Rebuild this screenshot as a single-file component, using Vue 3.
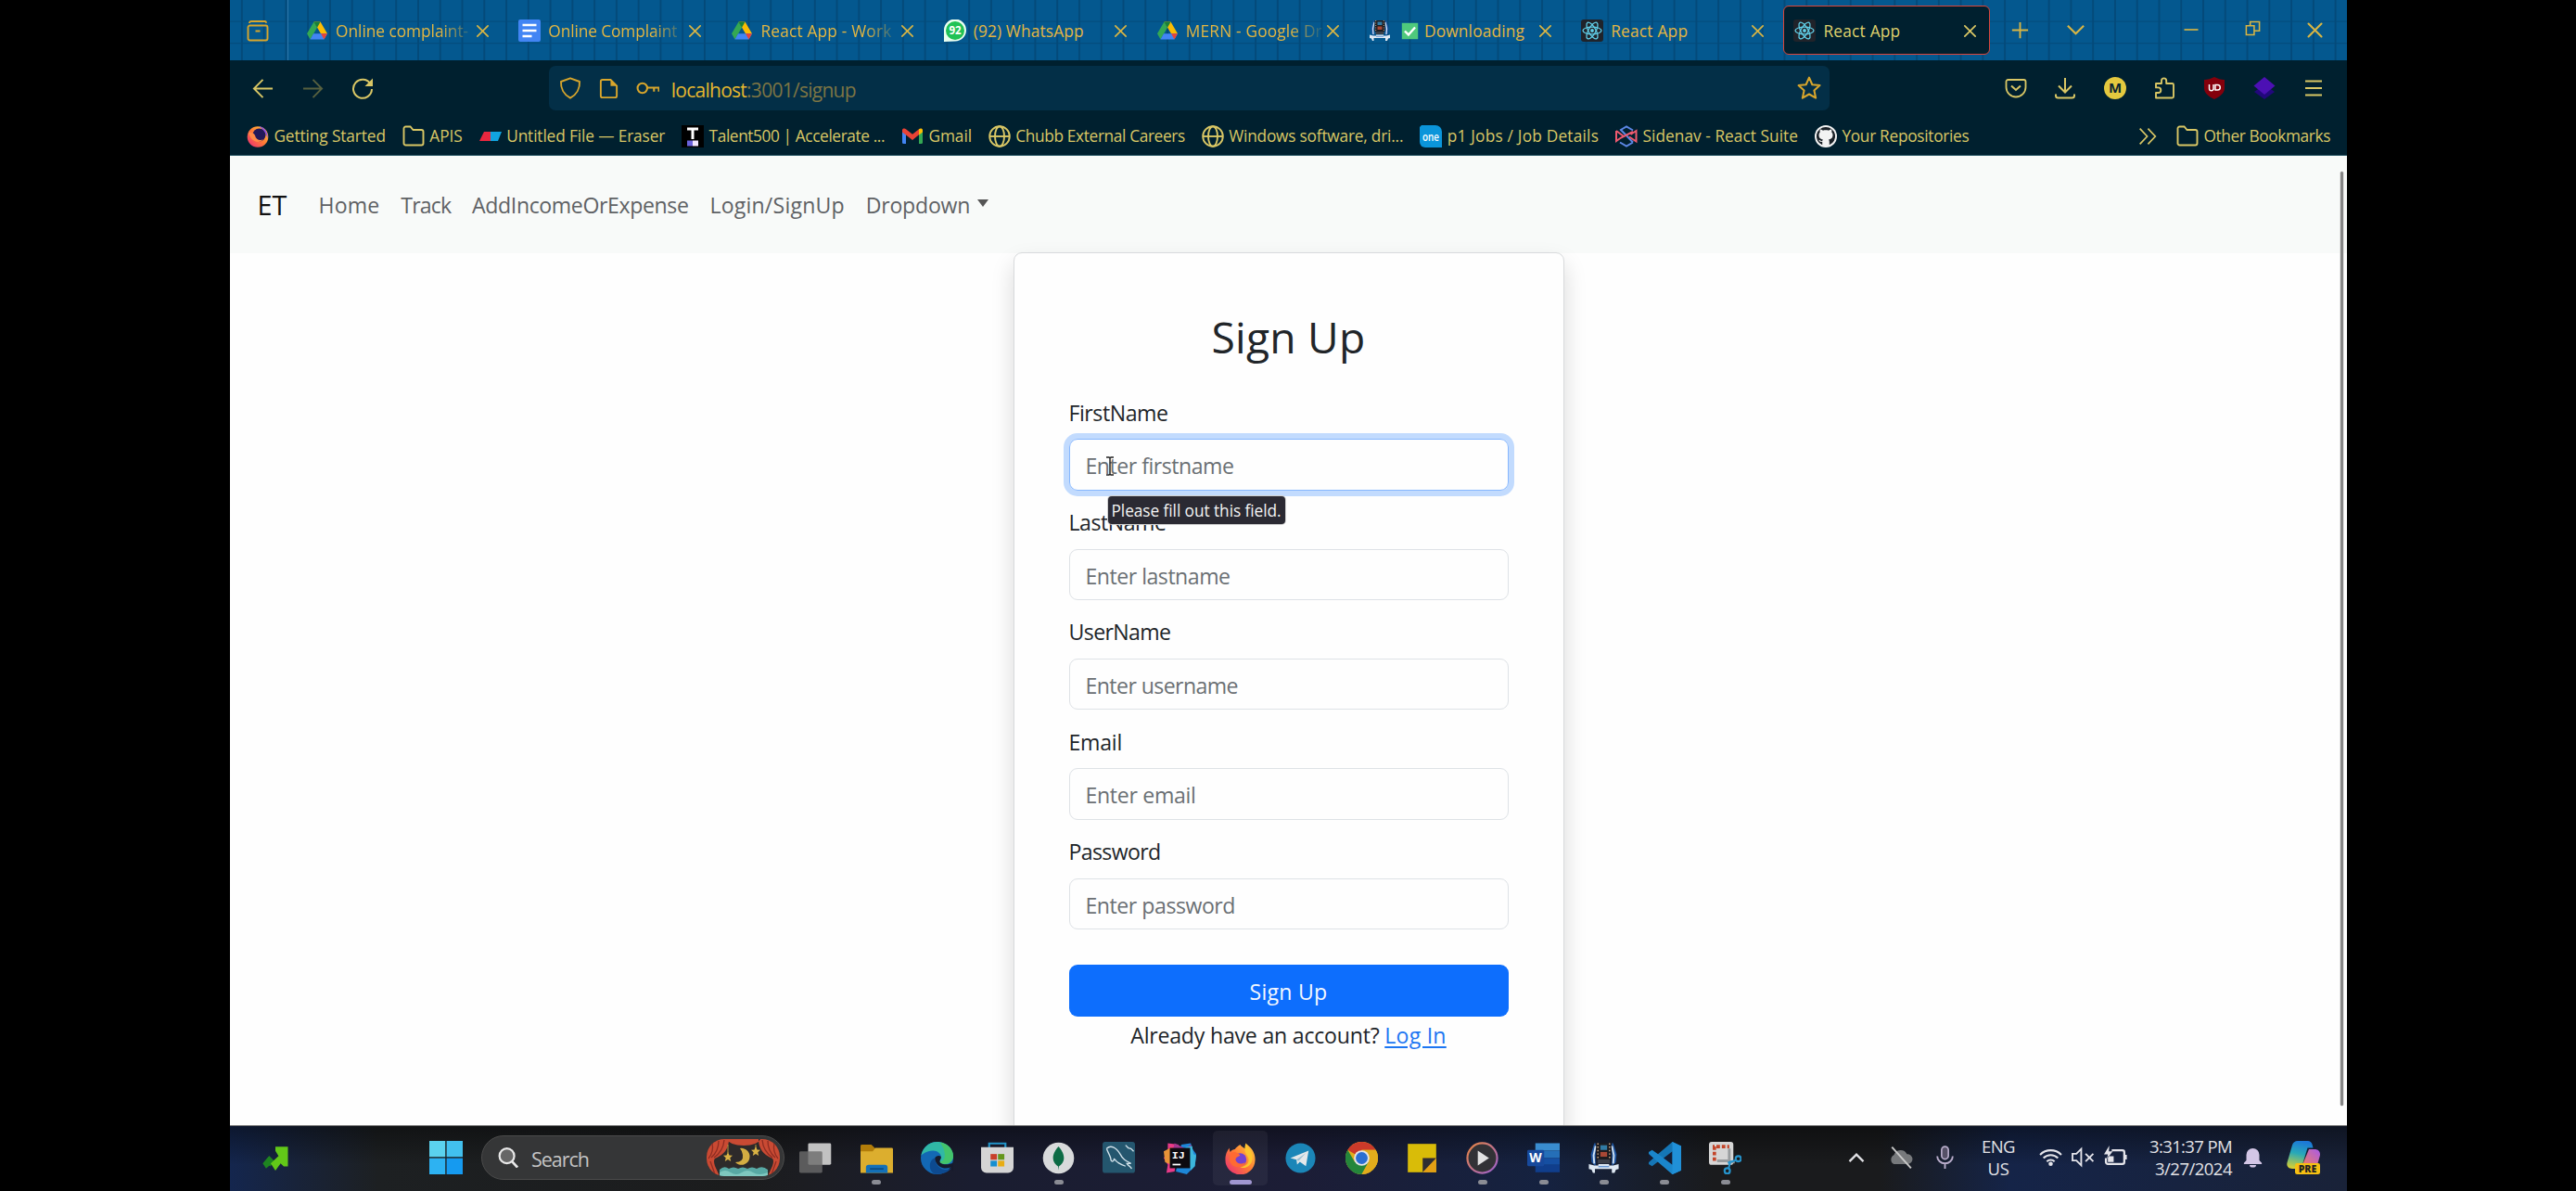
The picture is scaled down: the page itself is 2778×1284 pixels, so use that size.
<script setup>
import { h } from 'vue'

// Spreads letter spacing so that a text run takes the given width in pixels.
const vFit = {
  mounted(el, { value }) {
    const natural = el.getBoundingClientRect().width
    el.style.letterSpacing = (value - natural) / el.textContent.length + 'px'
  }
}

const react = '<rect width="24" height="24" rx="3" fill="#20232a"/><g fill="none" stroke="#61cfe8" stroke-width="1.3"><ellipse cx="12" cy="12" rx="10" ry="3.9"/><ellipse cx="12" cy="12" rx="10" ry="3.9" transform="rotate(60 12 12)"/><ellipse cx="12" cy="12" rx="10" ry="3.9" transform="rotate(120 12 12)"/></g><circle cx="12" cy="12" r="1.9" fill="#61cfe8"/>'
const film = '<path d="M5 1L2.500 9l.5 6 3 3V1zM19 1l2.500 8-.5 6-3 3V1z" fill="#1f55a0"/><path d="M6 3L4.500 10l.5 6M18 3l1.500 7-.5 6" fill="none" stroke="#cfe2f4" stroke-width="1.300"/><rect x="6.500" y="1" width="11" height="12" fill="#1d1c20"/><path d="M7.700 1v12M16.300 1v12" stroke="#c9a482" stroke-width="1" stroke-dasharray="1 1.500"/><path d="M9.500 2.500h5v3.500h-5z" fill="#317ba5"/><path d="M9.500 7.500h5v3.500h-5z" fill="#a84835"/><path d="M7.500 13h9v3h-9z" fill="#3b3f48"/><path d="M1 16.500l4 1h3v-1h8v1h3l4-1v3.500l-2 .5-1 2.500h-2V20h-1.500H7.500 5.500v3H4l-1-2.500-2-.5z" fill="#dfe9f3"/><path d="M8 18.300h8" stroke="#6898d4"/>'
const fox = '<path d="M12 2c1 2 3 2 4.500 4 0-2-.5-3.500-.5-5 4 3 7.300 7 7 12.500A11 11 0 0 1 1 13C1 9 2.500 6.500 4 4.500c0 1.500.2 2.300.7 3C5.500 6 7 5.500 8 5.500 9 4 10.500 3 12 2z" fill="url(#foxg)"/><path d="M16 1c1 3 6 6 5 12-1 5-5 7-9 6 4-1 7-3 6-7-1-3-4-4-2-11z" fill="#fdc52d"/><circle cx="12" cy="13" r="4.600" fill="#7542cf"/><path d="M5 8c3-1 5 0 7 2-1 1-3 1-3.500 3 .5 3 4 4 7 2-1 4-10 6-11.500-2z" fill="#ff6a32"/>'

const icons = {
  archive: '<path d="M4.500 2h15c1 0 1.500.7 1.500 1.800M3.500 6.500h17a2 2 0 0 1 2 2v12a2 2 0 0 1-2 2h-17a2 2 0 0 1-2-2v-12a2 2 0 0 1 2-2zM9.500 12.500h5M3 4c0-1.300.7-2 1.700-2" fill="none" stroke="#d8a62c" stroke-width="1.900"/>',
  drive: '<path d="M8.500 2.500h7l7.500 12.800h-7z" fill="#fbbc04"/><path d="M8.500 2.500L1 15.300l3.500 6.200L12 8.700z" fill="#34a853"/><path d="M8.500 2.500h7L12 8.700z" fill="#188038"/><path d="M8 15.300h8l-3.500 0h10.500l-3.500 6.200h-15z" fill="#4285f4"/><path d="M16 15.300h7l-3.500 6.200z" fill="#ea4335"/>',
  docs: '<rect width="24" height="24" rx="2" fill="#4285f4"/><path d="M4.500 6h15M4.500 12h15M4.500 18h10" stroke="#fff" stroke-width="2.600"/>',
  whatsapp: '<path d="M0 24V11A12 12 0 1 1 12 23.500z" fill="#eafff0"/><circle cx="12" cy="12" r="10" fill="#1fc255"/><text x="12" y="16.300" font-size="11.500" font-weight="700" fill="#fff" text-anchor="middle" font-family="Open Sans">92</text>',
  film, react, fox,
  check: '<rect x="1" y="1" width="22" height="22" fill="#4fc97c"/><path d="M5 12l5 5L19 7" fill="none" stroke="#fff" stroke-width="3"/>',
  x: '<path d="M4 4l16 16M20 4L4 20" stroke="currentColor" stroke-width="2.400" stroke-linecap="round"/>',
  plus: '<path d="M12 3v18M3 12h18" stroke="currentColor" stroke-width="2"/>',
  down: '<path d="M3 7l9 9 9-9" fill="none" stroke="currentColor" stroke-width="2.200"/>',
  up: '<path d="M3 17l9-9 9 9" fill="none" stroke="currentColor" stroke-width="2.700"/>',
  min: '<path d="M3 12h18" stroke="currentColor" stroke-width="2"/>',
  restore: '<path d="M2 8h12v14H2zM8 8V2h14v14h-8" fill="none" stroke="currentColor" stroke-width="2.200"/>',
  back: '<path d="M23 12H2.500M12 2l-10 10 10 10" fill="none" stroke="currentColor" stroke-width="2"/>',
  fwd: '<path d="M1 12h20.500M12 2l10 10-10 10" fill="none" stroke="currentColor" stroke-width="2"/>',
  reload: '<path d="M20.800 8A10 10 0 1 0 22 13" fill="none" stroke="currentColor" stroke-width="2"/><path d="M23 1.500v8.500h-8.500z" fill="currentColor"/>',
  shield: '<path d="M12 1.300L22 5c.5 7-3 14-10 17.700C5 19 1.500 12 2 5z" fill="none" stroke="currentColor" stroke-width="1.900" stroke-linejoin="round"/>',
  page: '<path d="M14 2H5a2 2 0 0 0-2 2v16a2 2 0 0 0 2 2h14a2 2 0 0 0 2-2V9z" fill="none" stroke="currentColor" stroke-width="2"/><path d="M14 1v8h8z" fill="currentColor"/>',
  key: '<circle cx="6.500" cy="11.500" r="5" fill="none" stroke="currentColor" stroke-width="2"/><path d="M11.500 11h12v4M18.500 11v4" fill="none" stroke="currentColor" stroke-width="2"/>',
  star: '<path d="M12 1.500l3.100 7 7.500.8-5.600 5 1.600 7.500L12 18l-6.600 3.800L7 14.300l-5.600-5 7.500-.8z" fill="none" stroke="currentColor" stroke-width="1.900" stroke-linejoin="round"/>',
  pocket: '<path d="M3.500 3h17a2 2 0 0 1 2 2v6a10.500 10.500 0 0 1-21 0V5a2 2 0 0 1 2-2z" fill="none" stroke="currentColor" stroke-width="1.800"/><path d="M7 9.500l5 4.500 5-4.500" fill="none" stroke="currentColor" stroke-width="2"/>',
  download: '<path d="M12 1v15M5 9.500l7 7 7-7M2 18.500V20a2.500 2.500 0 0 0 2.500 2.500h15A2.500 2.500 0 0 0 22 20v-1.500" fill="none" stroke="currentColor" stroke-width="2"/>',
  m: '<circle cx="12" cy="12" r="12" fill="#e4c93f"/><text x="12" y="17.300" font-size="15" font-weight="700" fill="#0a2431" text-anchor="middle" font-family="Open Sans">M</text>',
  puzzle: '<path d="M3 22.500V17h2.500a2.800 2.800 0 0 0 0-5.600H3V7h6V4a2.600 2.600 0 0 1 5.200 0v3h6.300a1.500 1.500 0 0 1 1.500 1.500V21a1.500 1.500 0 0 1-1.500 1.500z" fill="none" stroke="currentColor" stroke-width="1.900" stroke-linejoin="round"/>',
  ublock: '<path d="M12 0c4 2 7 3 11 3v9c0 6-6 9.500-11 12C7 21.500 1 18 1 12V3c4 0 7-1 11-3z" fill="#84000c"/><path d="M6.500 8v4.500a2 2 0 0 0 4.500 0V8v6M14 8.500h1.500a2.700 2.700 0 0 1 0 5.500H13V8.500z" fill="none" stroke="#fff" stroke-width="1.500"/>',
  layers: '<path d="M12 8l11 8-11 8-11-8z" fill="#22087c"/><path d="M12 0l11.500 9.500L12 19 .5 9.500z" fill="#4c10b4"/>',
  menu: '<path d="M3 4.500h18M3 12h18M3 19.500h18" stroke="currentColor" stroke-width="2"/>',
  ff: '<circle cx="12" cy="12.500" r="11.300" fill="url(#foxg)"/><circle cx="13.500" cy="10.500" r="7" fill="#22185a"/><path d="M13 1a11.500 11.500 0 0 1 9.500 13C21 9 19 5 13 1z" fill="#8a4ae8"/><path d="M2 8c4-1 6 1 7 3 1 5 6 6 9 4-4 5-13 4-16-7z" fill="#ff8a48"/>',
  folder: '<path d="M1.500 19.500v-16a2 2 0 0 1 2-2h5l3 3.500h9a2 2 0 0 1 2 2v12.500a2 2 0 0 1-2 2h-17a2 2 0 0 1-2-2z" fill="none" stroke="currentColor" stroke-width="1.900"/>',
  eraser: '<path d="M5 7h7v10H0z" fill="#e8273f"/><path d="M12 7h12l-4 10h-8z" fill="#11a3e0"/>',
  talent: '<rect width="24" height="24" fill="#000"/><path d="M6 4h12M12 3v12" stroke="#fff" stroke-width="3"/><path d="M6 16.500h6v6H6z" fill="#6a62dc"/><path d="M12 16.500h6v6h-6z" fill="#f1e6ff"/>',
  gmail: '<path d="M1 5h4v15H2.500A1.500 1.500 0 0 1 1 18.500z" fill="#4285f4"/><path d="M19 5h4v13.500a1.500 1.500 0 0 1-1.500 1.500H19z" fill="#34a853"/><path d="M1 5.500C1 3.500 3.500 3 5 4.300l7 5.500 7-5.500v6L12 16l-7-5.500-4-3z" fill="#ea4335"/><path d="M19 4.300c1.500-1.300 4-.8 4 1.200v2l-4 3z" fill="#fbbc04"/>',
  globe: '<g fill="none" stroke="currentColor" stroke-width="1.900"><circle cx="12" cy="12" r="10.800"/><ellipse cx="12" cy="12" rx="5" ry="10.800"/><path d="M1.500 12h21"/></g>',
  one: '<path d="M2 0h15a7 7 0 0 1 7 7v17H6a6 6 0 0 1-6-6V2z" fill="#0b95da"/><text x="12" y="16.500" font-size="13" font-weight="600" textLength="18" lengthAdjust="spacingAndGlyphs" fill="#fff" text-anchor="middle" font-family="Open Sans">one</text>',
  rsuite: '<g fill="none" stroke-width="2"><path d="M5 5.500L12 1.300l7 4.200M5 18.500l7 4.200 7-4.200M6 5l13 13.500" stroke="#5b87e5"/><path d="M1 6v11l5-3.500L19 7M1 6l8 6M15 12.500l7.500 5V6l-6 4" stroke="#ee5a6f"/></g>',
  github: '<circle cx="12" cy="12" r="12" fill="#f3f3f3"/><path d="M12 2a10 10 0 0 0-3.800 19.300v-3.500c-2.600.5-3.400-.8-4-2 2 .3 2 1.600 4 1.200.1-.7.400-1.200.8-1.500C5.500 15 4.500 13 4.500 10.500c0-1.200.5-2.200 1.200-3-.2-.8-.2-2 .2-3 1.300 0 2.300.7 3 1.200 2-.5 4.200-.5 6.200 0 .7-.5 1.700-1.200 3-1.200.4 1 .4 2.200.2 3 .7.8 1.200 1.800 1.200 3 0 2.500-1 4.500-4.500 5 .5.500.8 1.300.8 2.400v3.400A10 10 0 0 0 12 2z" fill="#1b2127"/>',
  more: '<path d="M2 2l9.500 10L2 22M12.500 2L22 12l-9.500 10" fill="none" stroke="currentColor" stroke-width="2"/>',
  stock: '<path d="M0 17l6-7 5 5-4 5-3-3-2 2.500z" fill="#1e8420"/><path d="M0 17l3 5L11 15 6 10z" fill="#1e8420"/><path d="M7.500 17l7.500-7-3-5V1h12v19h-4l-3-3-5 7z" fill="#62c818"/>',
  windows: '<path d="M0 0h11.500v11.500H0z" fill="#5bd2ee"/><path d="M12.400 0H24v11.500H12.400z" fill="#42c0ee"/><path d="M0 12.400h11.500V24H0z" fill="#2db2f2"/><path d="M12.400 12.400H24V24H12.400z" fill="#159af0"/>',
  search: '<circle cx="10.500" cy="10" r="8.700" fill="#666" stroke="#e8e8e8" stroke-width="2.400"/><path d="M16.500 16.500l6.500 7" stroke="#e8e8e8" stroke-width="3"/>',
  taskview: '<rect x="6.500" y="1" width="17" height="16" rx="1" fill="#c2c2c2"/><rect x="0" y="7" width="17" height="16" rx="1" fill="#6b6b6b" fill-opacity=".8"/>',
  explorer: '<path d="M0 3a1 1 0 0 1 1-1h7l3 3v5H0z" fill="#b27d0a"/><path d="M0 7h9l2-2.500h12a1 1 0 0 1 1 1V23H0z" fill="#dcae2e"/><path d="M4 23v-4a2 2 0 0 1 2-2h12a2 2 0 0 1 2 2v4z" fill="#1370b8"/><path d="M7 20h10" stroke="#0a4a80" stroke-width="1.200"/>',
  edge: '<circle cx="12" cy="12" r="12" fill="#1368b4"/><path d="M.3 10C1.500 4 6.500 0 12 0c7 0 12 5 12 10.500 0 4-3 6-6 6-2.500 0-4-1-4-2 0-1 1-1.500 1-3.500 0-2-2.500-4.500-6-4.500C4 6.500.8 9.500.3 10z" fill="#30b8a6"/><path d="M14 0.300C20 1 24 5.500 24 10.500c0 4-3 6-6 6-2.500 0-4-1-4-2 5 0 5-8 0-14.200z" fill="#49c75d" fill-opacity=".8"/><path d="M10.500 12c0 4.500 3.500 8.500 8 8.500 2 0 3-.5 4-1C20 23 15 24.300 10.500 23.800 5 21.500 6 13 10.500 12z" fill="#0d4a90"/><path d="M10.500 12c0 3 2 6.200 6 7.300 3 .6 6-.3 6.500-1.300v2.500l3 3V15l-5 1.500c-4 .6-7-.5-7-2 0-1 1-1.500 1-3.500-2-1.500-4 0-4.500 1z" fill="#161a2c"/>',
  store: '<path d="M6 5V1.200h12V5" fill="none" stroke="#2194c8" stroke-width="1.500"/><path d="M0 4h24v15a4 4 0 0 1-4 4H4a4 4 0 0 1-4-4z" fill="#d5d5d5"/><path d="M7 9h4.700v4.200H7z" fill="#c8402a"/><path d="M12.500 9h4.700v4.200h-4.700z" fill="#64961c"/><path d="M7 14h4.700v4.200H7z" fill="#168fd0"/><path d="M12.500 14h4.700v4.200h-4.700z" fill="#e8ad14"/>',
  mongo: '<circle cx="12" cy="12" r="11.500" fill="#d8dadb"/><path d="M12 3.500c3 3.500 4 6 4 8.500 0 3-2 5-3.700 6.200L12 21l-.3-2.800C10 17 8 15 8 12c0-2.500 1-5 4-8.500z" fill="#0c6b45"/>',
  mysql: '<rect width="24" height="23" rx="2" fill="#24566e"/><path d="M3 5c3-3 7-1 10 4 2 4 4 5 8 7l-3 0c1 2 3 2 3.500 4M3 5c1 3 2 4 3 7 0 2 1 3 2 2s0-2 1-1c2 3 5 4 8 5M17 2.500l2 2 2 .5 2 2" fill="none" stroke="#d4e4ec" stroke-width=".9"/>',
  ij: '<path d="M3 1l8 1-3 20-6 1 1-6-3-5 3-5z" fill="#e83a88"/><path d="M0 7l6-3v13l-5-2z" fill="#e89338"/><path d="M13 2l7-1 1 4 3 4-1 9-6 6-8-2z" fill="#1d86d8"/><path d="M8 1l8 4 4-3 2 8H6z" fill="#a2378f"/><path d="M16 4l5-1 1 6 2 1-1 8-3 3z" fill="#3cb6dc"/><rect x="4.500" y="4.500" width="15" height="15" fill="#0c0a10"/><text x="6" y="12.500" font-size="8" font-weight="700" fill="#fff" font-family="Liberation Mono">IJ</text><path d="M6.500 16.800h6" stroke="#fff" stroke-width="1.200"/>',
  telegram: '<circle cx="12" cy="12" r="11" fill="#1b86b8"/><path d="M4.500 12L18 6.500 16 18l-4.500-3.200-2 2-.5-3.600z" fill="#e4e8ea"/><path d="M9 13.200l7-5-5.500 6z" fill="#9ac0d4"/>',
  chrome: '<circle cx="12" cy="12" r="12" fill="#e1ac1c"/><path d="M12 12L1.600 6A12 12 0 0 1 22.400 6H12z" fill="#cb3a2a"/><path d="M1.600 6A12 12 0 0 0 12 24l5-9-5-3-5 3z" fill="#24863b"/><path d="M22.400 6H12v6l5 3-5 9A12 12 0 0 0 22.400 6z" fill="#e1ac1c"/><circle cx="12" cy="12" r="5.700" fill="#e4e4e4"/><circle cx="12" cy="12" r="4.400" fill="#2b6ed2"/>',
  notes: '<path d="M1.500 1.500h21v21h-21z" fill="#d9bc08"/><path d="M12.500 12h10v10.500h-10z" fill="#e39f14"/><path d="M12.500 12h10l-10 10.500z" fill="#2e2e32"/>',
  media: '<circle cx="12" cy="12" r="11" fill="#323236" stroke="url(#ring)" stroke-width="1.500"/><path d="M8.700 6.500L17 12l-8.300 5.500z" fill="#e2e2e2"/>',
  word: '<path d="M6 1h18v5.500H6z" fill="#3a8dd0"/><path d="M6 6.500h18V12H6z" fill="#256fb8"/><path d="M6 12h18v5H6z" fill="#154fa2"/><path d="M6 17h18v5.500H6z" fill="#103e8c"/><rect x="0" y="6" width="12.500" height="12" rx="1" fill="#17499c"/><text x="6.200" y="15.300" font-size="9.500" font-weight="700" fill="#fff" text-anchor="middle" font-family="Open Sans">W</text>',
  vscode: '<path d="M17.500 0L24 3v18l-6.500 3L7 14.500 2.500 18 0 16.500v-1.600L17.500 0z" fill="#1576b6"/><path d="M0 7.500L2.500 6 24 21l-6.500 3L0 9z" fill="#1a86cc"/><path d="M17.500 7v10L11 12z" fill="#151c33"/><path d="M17.500 0L24 3v18l-6.500 3z" fill="#2090d8"/><path d="M0 9.100L3.200 12 0 15z" fill="#151c33"/>',
  snip: '<rect x="0" y="0" width="18" height="17" rx="2" fill="#d6d6d6"/><path d="M4 14V3.500h11" fill="none" stroke="#c4452a" stroke-width="2.500" stroke-dasharray="2.600 1.400"/><path d="M15 5v10h4M6 14h8" stroke="#989c9e" stroke-width="2" fill="none"/><g fill="none" stroke="#2694cc" stroke-width="1.500"><circle cx="21.700" cy="12.500" r="2"/><circle cx="13.500" cy="21.500" r="2"/><path d="M20 13.500l-6 2M14.500 19.500L16 14"/></g>',
  cloud: '<path d="M5 18.500a5 5 0 0 1 0-9 7 7 0 0 1 13-1 5 5 0 0 1 1 10z" fill="#77797c"/><path d="M3 1.500l19 21" stroke="#c8c8c8" stroke-width="1.800"/>',
  mic: '<rect x="8.500" y="1" width="7" height="13" rx="3.500" fill="#555066" stroke="#b9adcb" stroke-width="1.600"/><path d="M4 11a8 7.500 0 0 0 16 0M12 18.500V24" fill="none" stroke="#b9adcb" stroke-width="1.800"/>',
  wifi: '<g fill="none" stroke="#e4e4ea" stroke-width="2"><path d="M1 9.500a15.500 15.500 0 0 1 22 0M4.500 13a10.600 10.600 0 0 1 15 0M8 16.500a5.700 5.700 0 0 1 8 0"/></g><circle cx="12" cy="19" r="2.200" fill="#e4e4ea"/>',
  mute: '<path d="M1 8.500h4l5-5v17l-5-5H1zM14.500 8.500l8 8M22.500 8.500l-8 8" fill="none" stroke="#e4e4ea" stroke-width="1.800"/>',
  battery: '<path d="M8 5h11a2 2 0 0 1 2 2v10a2 2 0 0 1-2 2H4a2 2 0 0 1-2-2v-4M22.500 9.500v5" fill="none" stroke="#e4e4ea" stroke-width="2.200"/><path d="M4 11h6v6H4zM5.500 0L0 9h4l-1 5 6-8H5z" fill="#e4e4ea"/>',
  bell: '<path d="M12 .5a8 8 0 0 1 8 8v7l3 3v1.500H1v-1.500l3-3v-7a8 8 0 0 1 8-8zM8 21h8a4 3 0 0 1-8 0z" fill="#d3c6e6"/>',
  copilot: '<path d="M8 0h7c2 0 3 1 3.500 3L19 5h-4l-4 13c-.6 1.500-2 2-3 2H4c-3 0-4.500-2-3.500-5L4 3c.6-2 2-3 4-3z" fill="url(#cop1)"/><path d="M16 6h4c3 0 4.500 2 3.800 5l-2 7H11z" fill="url(#cop2)"/><rect x="6" y="16" width="18" height="8" rx="1.500" fill="#f6c013"/><text x="15" y="22.500" font-size="7" font-weight="800" fill="#222" text-anchor="middle" font-family="Open Sans">PRE</text>'
}

const Icon = (p) => h('svg', {
  viewBox: '0 0 24 24', width: p.s || 24, height: p.t || p.s || 24, innerHTML: icons[p.n], class: 'ic'
})
Icon.props = ['n', 's', 't']

const tabs = [
  { i: 'drive', t: 'Online complaint-', w: 143, fade: 1 },
  { i: 'docs', t: 'Online Complaint', w: 139, fade: 1 },
  { i: 'drive', t: 'React App - Work', w: 141, fade: 1 },
  { i: 'whatsapp', t: '(92) WhatsApp', w: 119 },
  { i: 'drive', t: 'MERN - Google Dr', w: 147, fade: 1 },
  { i: 'film', t: 'Downloading', w: 108, check: 1 },
  { i: 'react', t: 'React App', w: 83 },
  { i: 'react', t: 'React App', w: 83, on: 1 }
]
const marks = [
  ['ff', 'Getting Started', 120.5], ['folder', 'APIS', 35.5], ['eraser', 'Untitled File — Eraser', 171],
  ['talent', 'Talent500 | Accelerate ...', 189.5], ['gmail', 'Gmail', 46.5], ['globe', 'Chubb External Careers', 182.5],
  ['globe', 'Windows software, dri...', 188], ['one', 'p1 Jobs / Job Details', 163.5],
  ['rsuite', 'Sidenav - React Suite', 167.5], ['github', 'Your Repositories', 137]
]
const fields = [
  ['FirstName', 107, 'Enter firstname', 160], ['LastName', 105, 'Enter lastname', 156],
  ['UserName', 110, 'Enter username', 164.5], ['Email', 57.5, 'Enter email', 119], ['Password', 99, 'Enter password', 161.5]
]
const apps = [
  ['taskview', 0], ['explorer', 1], ['edge', 0], ['store', 0], ['mongo', 1], ['mysql', 0], ['ij', 0], ['fox', 2],
  ['telegram', 0], ['chrome', 0], ['notes', 0], ['media', 1], ['word', 1], ['film', 1], ['vscode', 1], ['snip', 1]
]
</script>

<template>
  <div class="screen">
    <svg width="0" height="0" class="defs">
      <linearGradient id="foxg" x1="1" y1="0" x2="0" y2="1"><stop offset="0" stop-color="#ffd43c" /><stop offset=".5" stop-color="#ff7a35" /><stop offset="1" stop-color="#e8267c" /></linearGradient>
      <linearGradient id="ring" x1="0" y1="0" x2="1" y2="1"><stop offset="0" stop-color="#e88540" /><stop offset="1" stop-color="#9a60d0" /></linearGradient>
      <linearGradient id="cop1" x1="0.500" y1="0" x2="0.300" y2="1"><stop offset="0" stop-color="#1c78d8" /><stop offset=".45" stop-color="#28a9b8" /><stop offset="1" stop-color="#d8d030" /></linearGradient>
      <linearGradient id="cop2" x1="1" y1="0" x2="0" y2="1"><stop offset="0" stop-color="#a85ae8" /><stop offset="1" stop-color="#f08060" /></linearGradient>
    </svg>

    <div class="tabbar">
      <div class="archive"><Icon n="archive" /></div>
      <div v-for="(t, k) in tabs" :key="k" class="tab" :class="{ on: t.on }">
        <Icon :n="t.i" />
        <Icon v-if="t.check" n="check" s="19" class="check" />
        <div class="tt" :class="{ fade: t.fade }"><span v-fit="t.w" class="t">{{ t.t }}</span></div>
        <Icon n="x" s="17" class="close" />
      </div>
      <div class="tabtools"><span><Icon n="plus" s="23" /></span><span><Icon n="down" s="23" /></span></div>
      <div class="wintools"><span><Icon n="min" s="20" /></span><span><Icon n="restore" s="17" /></span><span><Icon n="x" s="21" /></span></div>
    </div>

    <div class="toolbar">
      <div class="slots left"><span><Icon n="back" s="23" /></span><span class="dim"><Icon n="fwd" s="23" /></span><span><Icon n="reload" s="24" /></span></div>
      <div class="url">
        <Icon n="shield" /><Icon n="page" s="23" /><Icon n="key" s="25" />
        <span v-fit="199" class="t addr">localhost<i>:3001/signup</i></span>
        <Icon n="star" s="26" class="star" />
      </div>
      <div class="slots right">
        <span v-for="n in ['pocket', 'download', 'm', 'puzzle', 'ublock', 'layers', 'menu']" :key="n"><Icon :n="n" /></span>
      </div>
    </div>

    <div class="bookmarks">
      <div v-for="m in marks" :key="m[1]" class="mark"><Icon :n="m[0]" /><span v-fit="m[2]" class="t">{{ m[1] }}</span></div>
      <Icon n="more" s="20" class="more" />
      <div class="mark"><Icon n="folder" /><span v-fit="136.5" class="t">Other Bookmarks</span></div>
    </div>

    <div class="page">
      <nav class="nav">
        <b v-fit="32" class="t">ET</b>
        <a v-fit="66" class="t">Home</a>
        <a v-fit="54" class="t">Track</a>
        <a v-fit="233.5" class="t">AddIncomeOrExpense</a>
        <a v-fit="145.5" class="t">Login/SignUp</a>
        <a v-fit="112.5" class="t">Dropdown</a>
        <i class="caret"></i>
      </nav>
      <div class="card">
        <h2><span v-fit="166" class="t">Sign Up</span></h2>
        <div v-for="(f, k) in fields" :key="k" class="field">
          <label><span v-fit="f[1]" class="t">{{ f[0] }}</span></label>
          <div class="input" :class="{ focus: k === 0 }">
            <span v-fit="f[3]" class="t">{{ f[2] }}</span>
            <svg v-if="k === 0" class="ibeam" width="10" height="21" viewBox="0 0 10 21"><path d="M1 1h3l1 1 1-1h3M5 2v17M1 20h3l1-1 1 1h3" fill="none" stroke="#222" stroke-width="1.500" /></svg>
            <div v-if="k === 0" class="tip"><span v-fit="183" class="t">Please fill out this field.</span></div>
          </div>
        </div>
        <button><span v-fit="84" class="t">Sign Up</span></button>
        <p><span v-fit="274" class="t pre">Already have an account? </span><a v-fit="66.5" class="t">Log In</a></p>
      </div>
      <div class="scroll"></div>
    </div>

    <div class="taskbar">
      <Icon n="stock" s="34" t="27" class="stock" />
      <Icon n="windows" s="36" class="start" />
      <div class="search">
        <Icon n="search" s="22" />
        <span v-fit="62" class="t">Search</span>
        <svg class="curtain" width="79" height="40" viewBox="0 0 79 40">
          <clipPath id="cl"><rect width="79" height="40" rx="19" /></clipPath>
          <g clip-path="url(#cl)">
            <rect width="79" height="40" fill="#2d2a2a" />
            <path d="M14 33q5-5 10-1 5-3 10 0 5-3 10 0 5-3 10 0 6-4 12 1v8H14z" fill="#58a9a4" />
            <path d="M14 36q6-4 12 0t12 0 12 0 16 0v5H14z" fill="#7fc8bf" />
            <path d="M22 0h36q-3 7-18 7T22 0zM0 0h24Q24 15 9 21q-2 2 0 8l5 11H0zM79 0H56q0 15 15 21 2 2 0 8l-5 11h13z" fill="#c94a33" />
            <path d="M6 4q2 10-4 17M13 2q0 11-8 18M19 1q-1 12-11 19M73 4q-2 10 4 17M66 2q0 11 8 18M60 1q1 12 11 19M4 24l5 14M75 24l-5 14" stroke="#8e2c22" stroke-width="1.300" fill="none" />
            <path d="M36 10a9 9 0 1 1-5 15q9 0 8-8-.5-4-3-7z" fill="#d3ad42" />
            <path d="M23 6v9M53 6v4" stroke="#b8963a" />
            <path d="M23 14l1.500 3.500 3.500.3-2.700 2.400.9 3.800-3.200-2-3.200 2 .9-3.800-2.700-2.400 3.500-.3zM53 8l1.500 3.500 3.500.3-2.700 2.400.9 3.800-3.200-2-3.200 2 .9-3.800-2.700-2.400 3.500-.3z" fill="#d9b244" />
          </g>
        </svg>
      </div>
      <div class="apps">
        <div v-for="a in apps" :key="a[0]" class="app" :class="{ run: a[1], active: a[1] === 2 }"><Icon :n="a[0]" s="35" /></div>
      </div>
      <div class="tray">
        <Icon n="up" s="20" class="c" /><Icon n="cloud" s="26" class="cl" /><Icon n="mic" s="25" class="mi" />
        <div class="two lang"><span v-fit="36" class="t">ENG</span><span v-fit="23" class="t">US</span></div>
        <Icon n="wifi" s="25" /><Icon n="mute" s="25" class="v" /><Icon n="battery" s="25" class="v" />
        <div class="two time"><span v-fit="89" class="t">3:31:37 PM</span><span v-fit="83" class="t">3/27/2024</span></div>
        <Icon n="bell" s="21" t="24" class="b" /><Icon n="copilot" s="36" class="co" />
      </div>
    </div>
  </div>
</template>

<style>
body { margin: 0; background: #000; overflow: hidden; }
</style>

<style scoped>
.screen { width: 2283px; height: 1284px; margin-left: 248px; display: flex; flex-direction: column; overflow: hidden; font-family: "Open Sans", "Noto Sans", sans-serif; font-size: 17.3px; color: #d9c765; }
.defs { position: absolute; }
.ic { display: block; flex: none; }
.t { display: inline-block; white-space: nowrap; flex: none; }
.pre { white-space: pre; }
.tabbar { height: 65px; flex: none; display: flex; align-items: center; color: #d8b544; background-color: #04588f;
  background-image: linear-gradient(90deg, transparent 12px, #044a7a 12px, #044a7a 13.500px, transparent 13.500px), linear-gradient(transparent 22.500px, #044a7a 22.500px, #044a7a 24px, transparent 24px);
  background-size: 23.780px 65px, 100% 23.600px; }
.archive { width: 63px; height: 65px; box-sizing: border-box; border-right: 1px solid #2c78ab; margin-right: 5px; padding: 0 0 0 18px; display: flex; align-items: center; flex: none; }
.tab { width: 223px; height: 53px; box-sizing: border-box; margin: 0 3.100px; padding: 1px 15px 0 10px; border: 1px solid transparent; border-radius: 6px; display: flex; align-items: center; flex: none; }
.tab.on { background: #00202f; border-color: #d9453a; color: #d9c765; }
.tt { flex: 1; min-width: 0; margin-left: 8px; overflow: hidden; padding-top: 1px; color: #e3b642; }
.on .tt { color: #dfd06c; }
.tt.fade { mask-image: linear-gradient(90deg, #000 112px, rgba(0, 0, 0, .2) 143px); }
.check { margin-left: 11px; margin-right: -2px; }
.close { margin-right: -3px; margin-left: 3px; }
.tabtools { display: flex; margin-left: -1px; }
.tabtools span { width: 60px; display: flex; justify-content: center; }
.wintools { display: flex; margin-left: auto; margin-right: 1px; }
.wintools span { width: 67px; display: flex; justify-content: center; }
.toolbar { height: 60px; flex: none; background: #00202f; display: flex; align-items: center; }
.slots { display: flex; align-items: center; }
.slots span { width: 53.600px; display: flex; justify-content: center; }
.slots .dim { color: #56603f; }
.left { margin-left: 9px; }
.right { margin-left: 174px; }
.url { width: 1381px; height: 48px; box-sizing: border-box; margin-left: 174px; border-radius: 7px; background: #032f47; display: flex; align-items: center; padding: 0 9px 0 11px; color: #d8a62c; gap: 18px; }
.addr { font-size: 21px; color: #e5b72f; margin-left: -5px; padding-top: 3px; }
.addr i { font-style: normal; color: #7d7544; }
.star { margin-left: auto; }
.bookmarks { height: 42.500px; box-sizing: border-box; border-bottom: 1.500px solid #2d5a68; flex: none; background: #00202f; display: flex; align-items: center; padding: 2px 18px 0 18px; gap: 18px; }
.mark { display: flex; align-items: center; gap: 5.400px; }
.more { margin-left: auto; margin-right: 3px; }
.page { height: 1045.500px; flex: none; overflow: hidden; background: #fefefe; position: relative; color: #212529; font-size: 23.100px; }
.nav { height: 105px; box-sizing: border-box; background: #f8faf9; display: flex; align-items: center; padding: 1px 0 0 29.500px; color: #5f6265; }
.nav a { margin-right: 22.800px; }
.nav b { font-weight: 400; font-size: 28.800px; color: #111; margin-right: 34px; }
.nav .caret { margin-left: -15px; border: 6.500px solid transparent; border-top: 8px solid #555; border-bottom: 0; margin-top: -3px; }
.card { width: 594px; height: 949px; box-sizing: border-box; margin: -1px 0 0 844.500px; border: 1.500px solid #d8dadc; border-radius: 9px; background: #fefefe; box-shadow: 0 12px 24px rgba(0, 0, 0, .15); padding: 62px 59px 0; position: relative; }
h2 { margin: 0 0 34.500px; height: 57px; line-height: 57px; font-size: 46.200px; font-weight: 400; text-align: center; }
.field { margin-bottom: 15.700px; }
label { display: block; height: 35.700px; box-sizing: border-box; padding-top: 1.500px; line-height: 35.700px; margin-bottom: 11.600px; }
.input { position: relative; height: 55.400px; box-sizing: border-box; border: 1.500px solid #dee2e6; border-radius: 9px; padding: 2px 0 0 17px; line-height: 53px; color: #6b7074; }
.input.focus { border-color: #86b7fe; box-shadow: 0 0 0 6px #c2dbfe; z-index: 2; }
.ibeam { position: absolute; left: 38px; top: 18px; }
.tip { position: absolute; left: 41px; top: 61px; width: 191px; height: 30px; box-sizing: border-box; border-radius: 4px; background: #2b2a33; color: #f4f4f4; font-size: 17.300px; line-height: 31px; padding-left: 4px; box-shadow: 0 0 0 1px #d0d0d0; }
button { display: block; width: 100%; height: 55.600px; margin-top: 38px; border: 0; border-radius: 9px; background: #0d6efd; color: #f4f8ff; font: inherit; padding: 3px 0 0; }
p { margin: 3px 0 0; text-align: center; line-height: 35.700px; font-size: 23.100px; display: flex; justify-content: center; }
p a { color: #1d76f2; text-decoration: underline; text-decoration-thickness: 1.500px; text-underline-offset: 3px; }
.scroll { position: absolute; right: 4px; top: 17px; width: 3px; height: 1007px; background: #858585; border-radius: 2px; box-shadow: 0 0 0 .5px #ccc; }
.taskbar { height: 71px; flex: none; box-sizing: border-box; border-top: 1px solid #777; display: flex; align-items: center; color: #e2e2e6; font-size: 18.500px; padding-bottom: 2px;
  background: linear-gradient(rgba(0, 0, 0, .4), transparent 60%), linear-gradient(90deg, #14264e 0, #18233a 70px, #1d2022 160px, #1b1c1d 550px, #1c1d22 620px, #1a1d30 800px, #1c1d36 1150px, #152240 1420px, #1a1b1d 1600px, #1a1b1d 1780px, #152448 1920px, #192238 2283px); }
.stock { margin-left: 32px; }
.start { margin-left: 149px; }
.search { width: 327px; height: 48px; box-sizing: border-box; margin-left: 20px; border: 1px solid #4b4b4b; border-radius: 24px; background: #353637; display: flex; align-items: center; padding: 0 4px 0 17px; font-size: 21.500px; color: #c4c4c4; }
.search .t { margin-left: 14px; padding-top: 2px; }
.curtain { margin-left: auto; }
.apps { display: flex; margin-left: 1px; }
.app { position: relative; width: 59.400px; height: 59px; margin: 0 3px; display: flex; justify-content: center; align-items: center; border-radius: 5px; }
.app.active { background: rgba(255, 255, 255, .05); }
.app.run::after { content: ""; position: absolute; left: 25px; bottom: 1px; width: 10px; height: 5px; border-radius: 3px; background: #8a8c94; }
.app.active::after { left: 18px; width: 24px; background: #a096d0; }
.tray { display: flex; align-items: center; margin-left: auto; padding-right: 29px; }
.two { display: flex; flex-direction: column; line-height: 23.700px; height: 47.400px; }
.lang { align-items: center; margin: 0 26px 0 27px; }
.time { align-items: flex-end; margin: 0 12px 0 24px; }
.cl { margin-left: 25px; }
.mi { margin-left: 22px; }
.c { margin-left: 0; }
.v { margin-left: 10px; }
.co { margin-left: 26px; }
</style>
